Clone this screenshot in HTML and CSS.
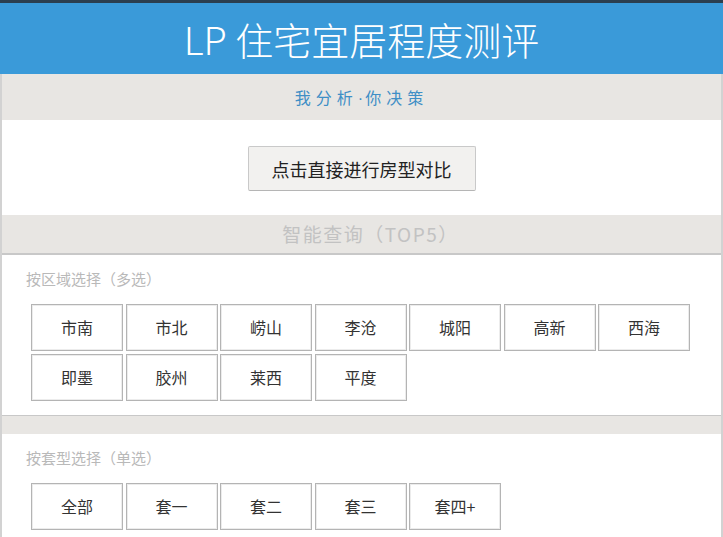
FILE: index.html
```html
<!DOCTYPE html>
<html lang="zh-CN">
<head>
    <meta charset="UTF-8">
    <meta name="viewport" content="width=device-width, initial-scale=1.0">
    <title>LP 住宅宜居程度测评</title>
    <link rel="stylesheet" href="styles.css">
</head>
<body>
    <div class="header">LP 住宅宜居程度测评</div>
    <div class="page">
        <div class="slogan">我分析<span class="dot">·</span>你决策</div>
        <div class="compare">
            <button class="compare-btn">点击直接进行房型对比</button>
        </div>
        <div class="band-title">智能查询（TOP5）</div>

        <div class="section">
            <div class="label">按区域选择（多选）</div>
            <div class="options">
                <div class="option">市南</div>
                <div class="option">市北</div>
                <div class="option">崂山</div>
                <div class="option">李沧</div>
                <div class="option">城阳</div>
                <div class="option">高新</div>
                <div class="option">西海</div>
                <div class="option">即墨</div>
                <div class="option">胶州</div>
                <div class="option">莱西</div>
                <div class="option">平度</div>
            </div>
        </div>
        <div class="band"></div>

        <div class="section">
            <div class="label">按套型选择（单选）</div>
            <div class="options">
                <div class="option">全部</div>
                <div class="option">套一</div>
                <div class="option">套二</div>
                <div class="option">套三</div>
                <div class="option">套四+</div>
            </div>
        </div>
    </div>
</body>
</html>
```

FILE: styles.css
```css
body {
    margin: 0;
    font-family: "Noto Sans CJK SC", "Noto Sans", sans-serif;
    background-color: #fff;
    color: #333;
}
.header {
    height: 71px;
    border-top: 3px solid #2b3e4f;
    background-color: #3a9ad9;
    color: #fff;
    font-size: 38px;
    font-weight: 300;
    line-height: 71px;
    text-align: center;
}
.page {
    border-left: 2px solid #d2d2d2;
    border-right: 2px solid #d2d2d2;
    min-height: 463px;
}
.slogan {
    height: 46px;
    line-height: 46px;
    background-color: #e8e6e3;
    color: #3f8fc6;
    font-size: 16px;
    letter-spacing: 5px;
    text-align: center;
}
.slogan .dot {
    font-family: "Liberation Sans", sans-serif;
    letter-spacing: 2px;
}
.compare {
    height: 95px;
    display: flex;
    justify-content: center;
    align-items: center;
}
.compare-btn {
    height: 45px;
    padding: 0 23px;
    font-family: inherit;
    font-size: 18px;
    color: #222;
    background-color: #f2f1ef;
    border: 1px solid #c9c9c9;
    border-bottom-color: #b5b5b5;
    border-radius: 2px;
    margin-top: 2px;
}
.band-title {
    height: 38px;
    line-height: 38px;
    padding-left: 18px;
    background-color: #e8e6e3;
    border-bottom: 2px solid #c8c8c8;
    color: #c2c2c2;
    font-size: 19px;
    letter-spacing: 1.5px;
    text-align: center;
}
.section {
    padding: 14px 24px 14px 24px;
}
.label {
    height: 20px;
    line-height: 20px;
    font-size: 15px;
    color: #b9b9b9;
    margin-bottom: 15px;
}
.options {
    display: grid;
    grid-template-columns: repeat(7, 92px);
    column-gap: 2.5px;
    row-gap: 3px;
    padding-left: 5px;
}
.option {
    height: 45px;
    line-height: 45px;
    text-align: center;
    font-size: 16px;
    color: #333;
    border: 1px solid #b4b4b4;
    box-shadow: inset 0 0 0 1px #ececec;
}
.band {
    height: 18px;
    background-color: #e8e6e3;
    border-top: 1px solid #c8c8c8;
}
```
